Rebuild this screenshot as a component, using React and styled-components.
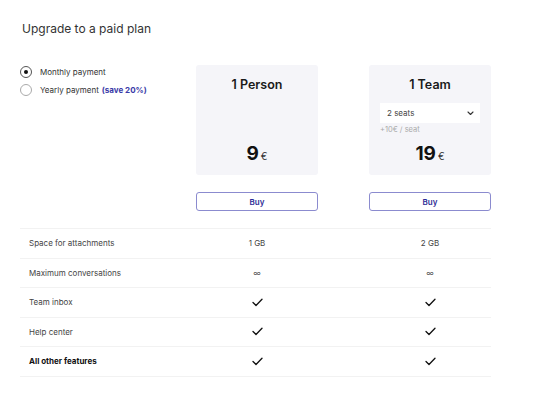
import React from "react";
import styled, { createGlobalStyle } from "styled-components";

const GlobalStyle = createGlobalStyle`
  body {
    margin: 0;
    background: #ffffff;
    font-family: Inter, "Noto Sans", sans-serif;
    color: #222;
  }
`

const Page = styled.div`
  padding: 21px 0 0 20px;
  width: 534px;
  box-sizing: border-box;
`

const Title = styled.h1`
  margin: 0 0 0 2px;
  font-size: 12px;
  font-weight: 400;
  line-height: 16px;
  color: #333;
`

const Grid = styled.div`
  display: grid;
  grid-template-columns: 125px 122px 122px;
  column-gap: 51px;
`

const PlanArea = styled(Grid)`
  margin-top: 28px;
`

const RadioGroup = styled.div`
  display: flex;
  flex-direction: column;
  gap: 6px;
  padding-top: 1px;
  white-space: nowrap;
`

const RadioRow = styled.label`
  display: flex;
  align-items: center;
  gap: 8px;
  font-size: 8px;
  color: #333;
  line-height: 11px;
`

const RadioCircle = styled.span`
  flex: none;
  width: 10px;
  height: 10px;
  border-radius: 50%;
  border: 1px solid ${p => (p.$checked ? "#555" : "#aaa")};
  display: flex;
  align-items: center;
  justify-content: center;
  &::after {
    content: "";
    width: 4px;
    height: 4px;
    border-radius: 50%;
    background: ${p => (p.$checked ? "#111" : "transparent")};
  }
`

const Save = styled.span`
  color: #3a3aa8;
  font-weight: 700;
  margin-left: 3px;
`

const PlanColumn = styled.div`
  display: flex;
  flex-direction: column;
  gap: 17px;
`

const Card = styled.div`
  height: 110px;
  box-sizing: border-box;
  background: #f5f5f9;
  border-radius: 3px;
  padding: 13px 11px 8px;
  display: flex;
  flex-direction: column;
  align-items: stretch;
`

const PlanName = styled.div`
  text-align: center;
  font-size: 12.5px;
  font-weight: 600;
  color: #1a1a1a;
  line-height: 14px;
`

const Select = styled.div`
  margin-top: 11px;
  height: 20px;
  background: #fff;
  display: flex;
  align-items: center;
  justify-content: space-between;
  padding: 0 6px 0 7px;
  font-size: 8px;
  color: #444;
`

const Hint = styled.div`
  margin-top: 2px;
  font-size: 7.5px;
  color: #aaa;
`

const Price = styled.div`
  margin-top: auto;
  text-align: center;
  font-size: 19px;
  font-weight: 700;
  color: #111;
  line-height: 22px;
`

const Currency = styled.span`
  font-size: 10px;
  font-weight: 400;
  color: #333;
  margin-left: 2px;
`

const BuyButton = styled.button`
  height: 19px;
  background: #fff;
  border: 1px solid #8b8bcf;
  border-radius: 3px;
  font-family: Inter, "Noto Sans", sans-serif;
  font-size: 8px;
  font-weight: 600;
  color: #2e2e96;
  padding: 0;
`

const Table = styled.div`
  margin-top: 17px;
  width: 471px;
  border-top: 1px solid #f2f2f2;
`

const Row = styled(Grid)`
  height: 29.5px;
  align-items: center;
  border-bottom: 1px solid #f2f2f2;
  box-sizing: border-box;
`

const Label = styled.div`
  padding-left: 9px;
  font-size: 8px;
  white-space: nowrap;
  font-weight: ${p => (p.$bold ? 700 : 400)};
  color: ${p => (p.$bold ? "#111" : "#444")};
`

const Value = styled.div`
  text-align: center;
  font-size: 8px;
  color: #444;
  display: flex;
  justify-content: center;
`

const InfinityValue = styled(Value)`
  color: #555;
  font-size: 8px;
`

function Check() {
  return (
    <svg width="11" height="9" viewBox="0 0 11 9">
      <path d="M1 4.5 L4 7.5 L10 1.2" fill="none" stroke="#111" strokeWidth="1.3" strokeLinecap="round" strokeLinejoin="round" />
    </svg>
  )
}

function Chevron() {
  return (
    <svg width="7" height="5" viewBox="0 0 7 5">
      <path d="M1 1 L3.5 3.5 L6 1" fill="none" stroke="#333" strokeWidth="1.1" strokeLinecap="round" strokeLinejoin="round" />
    </svg>
  )
}

const features = [
  { label: "Space for attachments", a: "1 GB", b: "2 GB" },
  { label: "Maximum conversations", a: "∞", b: "∞", inf: true },
  { label: "Team inbox", check: true },
  { label: "Help center", check: true },
  { label: "All other features", check: true, bold: true },
]

export default function App() {
  return (
    <>
      <GlobalStyle />
      <Page>
        <Title>Upgrade to a paid plan</Title>
        <PlanArea>
          <RadioGroup>
            <RadioRow><RadioCircle $checked />Monthly payment</RadioRow>
            <RadioRow><RadioCircle /><span>Yearly payment<Save>(save 20%)</Save></span></RadioRow>
          </RadioGroup>
          <PlanColumn>
            <Card>
              <PlanName>1 Person</PlanName>
              <Price>9<Currency>€</Currency></Price>
            </Card>
            <BuyButton>Buy</BuyButton>
          </PlanColumn>
          <PlanColumn>
            <Card>
              <PlanName>1 Team</PlanName>
              <Select>2 seats<Chevron /></Select>
              <Hint>+10€ / seat</Hint>
              <Price>19<Currency>€</Currency></Price>
            </Card>
            <BuyButton>Buy</BuyButton>
          </PlanColumn>
        </PlanArea>
        <Table>
          {features.map(f => {
            const Cell = f.inf ? InfinityValue : Value
            return (
              <Row key={f.label}>
                <Label $bold={f.bold}>{f.label}</Label>
                <Cell>{f.check ? <Check /> : f.a}</Cell>
                <Cell>{f.check ? <Check /> : f.b}</Cell>
              </Row>
            )
          })}
        </Table>
      </Page>
    </>
  );
}
